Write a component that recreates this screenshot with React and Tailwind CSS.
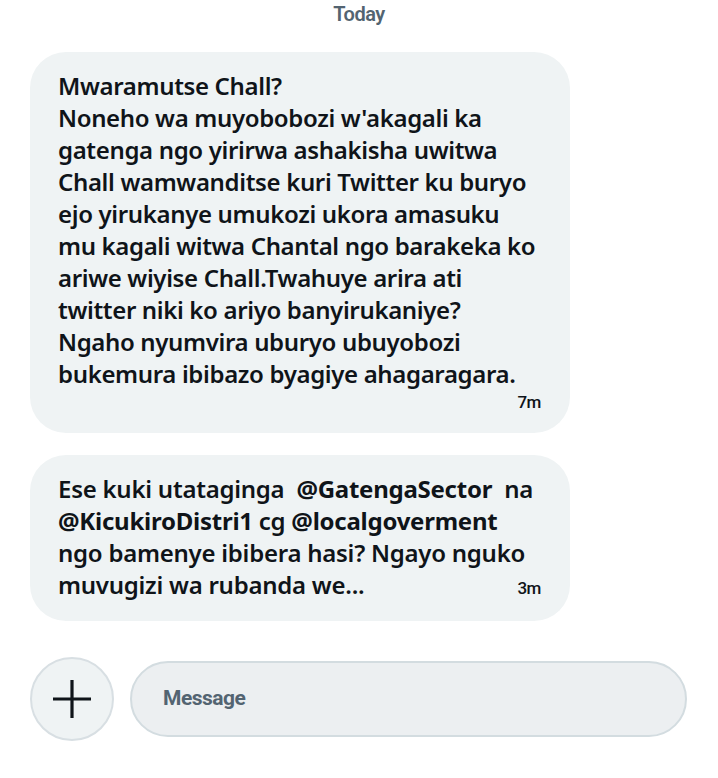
import React from 'react';

const firstMessage = [
  'Mwaramutse Chall?',
  "Noneho wa muyobobozi w'akagali ka",
  'gatenga ngo yirirwa ashakisha uwitwa',
  'Chall wamwanditse kuri Twitter ku buryo',
  'ejo yirukanye umukozi ukora amasuku',
  'mu kagali witwa Chantal ngo barakeka ko',
  'ariwe wiyise Chall.Twahuye arira ati',
  'twitter niki ko ariyo banyirukaniye?',
  'Ngaho nyumvira uburyo ubuyobozi',
  'bukemura ibibazo byagiye ahagaragara.',
];

const Bubble = ({ children }) => (
  <div className="w-[540px] rounded-[36px] bg-[#eff3f4] pl-[28px] pr-[28px] pt-[18px] pb-[17px] text-[#0f1419]">
    {children}
  </div>
);

export default function App() {
  return (
    <div className="w-[718px] h-[778px] bg-white overflow-hidden font-['Noto_Sans',sans-serif]">
      {/* date separator */}
      <div className="h-[28px] flex items-center justify-center">
        <span className="font-['Roboto',sans-serif] font-semibold text-[20px] text-[#536471] tracking-tight">Today</span>
      </div>

      <div className="pl-[30px] pt-[24px] flex flex-col gap-[22px]">
        <Bubble>
          <div className="text-[24px] leading-[32px] font-semibold whitespace-nowrap tracking-[-0.35px]">
            {firstMessage.map((line) => (
              <div key={line}>{line}</div>
            ))}
          </div>
          <div className="flex justify-end h-[26px] items-center">
            <span className="font-['Roboto',sans-serif] font-medium text-[17px] text-[#0f1419] tracking-tight mr-[1px]">7m</span>
          </div>
        </Bubble>

        <Bubble>
          <div className="text-[24px] leading-[32px] font-semibold whitespace-nowrap tracking-[-0.25px]">
            <div>
              Ese kuki utataginga&nbsp; <span className="font-bold">@GatengaSector</span>&nbsp; na
            </div>
            <div>
              <span className="font-bold">@KicukiroDistri1</span> cg <span className="font-bold">@localgoverment</span>
            </div>
            <div>ngo bamenye ibibera hasi? Ngayo nguko</div>
            <div className="flex justify-between items-baseline">
              <span>muvugizi wa rubanda we...</span>
              <span className="font-['Roboto',sans-serif] font-medium text-[17px] tracking-tight mr-[1px]">3m</span>
            </div>
          </div>
        </Bubble>
      </div>

      {/* composer */}
      <div className="pl-[30px] pr-[31px] pt-[36px] flex items-center gap-[16px]">
        <button className="w-[84px] h-[84px] shrink-0 rounded-full bg-[#eff3f4] border-2 border-[#d8dfe3] flex items-center justify-center">
          <svg width="40" height="40" viewBox="0 0 40 40" fill="none" stroke="#0f1419" strokeWidth="3.2">
            <path d="M20 1v38M1 20h38" />
          </svg>
        </button>
        <div className="flex-1 h-[76px] rounded-full bg-[#eceff1] border-2 border-[#d3dce0] flex items-center pl-[31px]">
          <span className="font-['Roboto',sans-serif] font-bold text-[21px] text-[#536471] tracking-[-0.5px]">Message</span>
        </div>
      </div>
    </div>
  );
}
